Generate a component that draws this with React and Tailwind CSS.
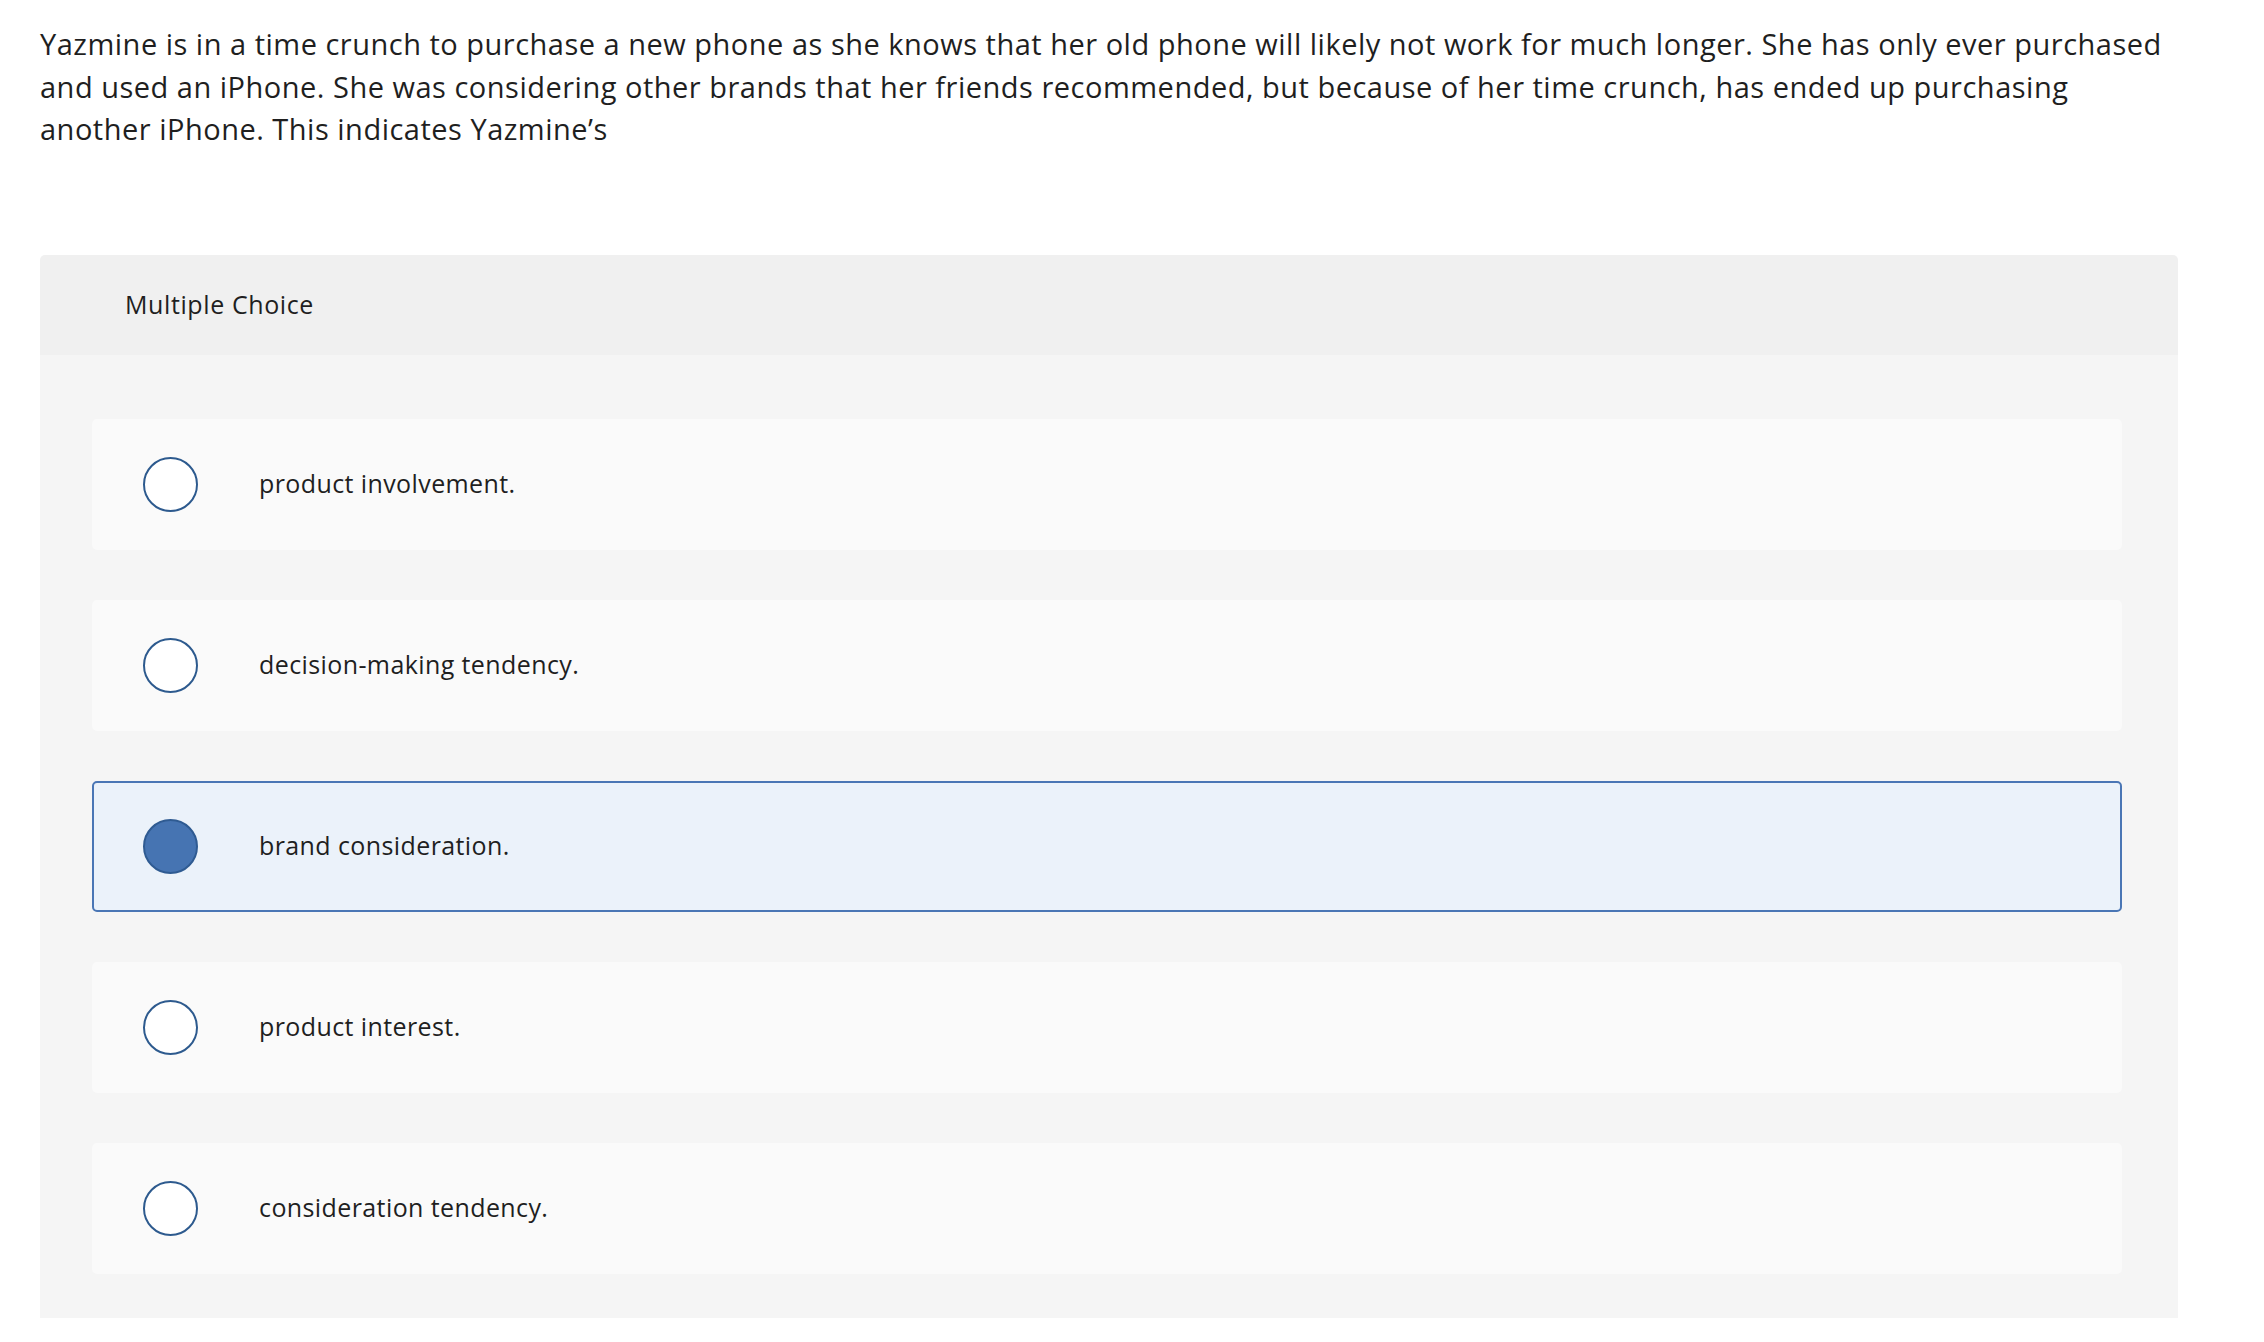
import { useState } from 'react';

const options = [
  'product involvement.',
  'decision-making tendency.',
  'brand consideration.',
  'product interest.',
  'consideration tendency.',
];

const App = () => {
  const [selected, setSelected] = useState(2);

  return (
    <div className="min-h-screen bg-white font-['Open_Sans','Noto_Sans',sans-serif] text-[#1f1f1f]">
      <div className="w-[2138px] ml-[40px] pt-[23px] pb-[40px]">
        {/* Question */}
        <p className="text-[29px] leading-[42.5px] tracking-[0.5px]">
          Yazmine is in a time crunch to purchase a new phone as she knows that her old phone will likely not work for much longer. She has only ever purchased and used an iPhone. She was considering other brands that her friends recommended, but because of her time crunch, has ended up purchasing another iPhone. This indicates Yazmine’s
        </p>

        {/* Answer panel */}
        <div className="mt-[104px] rounded-t-[5px] overflow-hidden">
          <div className="h-[100px] bg-[#f0f0f0] flex items-center pl-[85px]">
            <span className="text-[25px] tracking-[0.6px]">Multiple Choice</span>
          </div>

          <div className="bg-[#f5f5f5] pt-[64px] pb-[44px] pl-[52px] pr-[56px] flex flex-col gap-[50px]">
            {options.map((opt, i) => {
              const isSel = selected === i;
              return (
                <button
                  key={opt}
                  onClick={() => setSelected(i)}
                  className={`h-[131px] w-full flex items-center text-left rounded-[5px] border-2 pl-[49px] ${
                    isSel ? 'bg-[#ebf2fa] border-[#4a76b5]' : 'bg-[#fafafa] border-transparent'
                  }`}
                >
                  <span
                    className={`w-[55px] h-[55px] rounded-full border-[2.5px] shrink-0 ${
                      isSel ? 'bg-[#4674b2] border-[#2f5b92]' : 'bg-white border-[#2d5a8e]'
                    }`}
                  ></span>
                  <span className="ml-[61px] text-[25px] tracking-[0.4px]">{opt}</span>
                </button>
              );
            })}
          </div>
        </div>
      </div>
    </div>
  );
};

export default App;
